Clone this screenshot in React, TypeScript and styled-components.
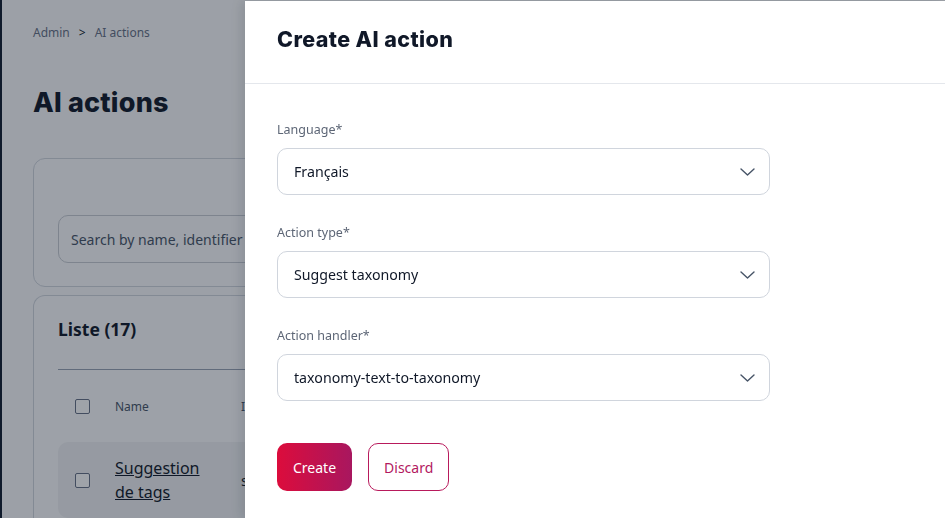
import { FC } from 'react';
import styled, { createGlobalStyle } from 'styled-components';

const GlobalStyle = createGlobalStyle`
  * {
    box-sizing: border-box;
  }
  body {
    margin: 0;
    font-family: 'Noto Sans', 'Open Sans', sans-serif;
    background-color: #f9fafb;
    color: #101828;
  }
`;

interface FieldProps {
  label: string;
  value: string;
}

const ChevronDown: FC = () => (
  <svg width='15' height='8' viewBox='0 0 15 8' fill='none'>
    <path d='M1 1l6.5 6 6.5-6' stroke='#475467' strokeWidth='1.4' strokeLinecap='round' strokeLinejoin='round' />
  </svg>
);

const SelectField: FC<FieldProps> = ({ label, value }) => (
  <Field>
    <FieldLabel>{label}</FieldLabel>
    <SelectBox>
      <span>{value}</span>
      <ChevronDown />
    </SelectBox>
  </Field>
);

const App: FC = () => {
  return (
    <>
      <GlobalStyle />
      <Page>
        <SideEdge />
        <Main>
          <Breadcrumbs>
            <span>Admin</span>
            <Separator>&gt;</Separator>
            <span>AI actions</span>
          </Breadcrumbs>
          <PageTitle>AI actions</PageTitle>
          <FilterCard>
            <SearchInput>Search by name, identifier</SearchInput>
          </FilterCard>
          <ListCard>
            <ListTitle>Liste (17)</ListTitle>
            <TableHead>
              <CellBox>
                <Checkbox />
              </CellBox>
              <HeadCell>Name</HeadCell>
              <HeadCell>Identifier</HeadCell>
            </TableHead>
            <TableRow>
              <CellBox>
                <Checkbox />
              </CellBox>
              <NameLink>Suggestion de tags</NameLink>
              <RowText>suggest-tags</RowText>
            </TableRow>
          </ListCard>
        </Main>
      </Page>
      <Overlay />
      <Drawer>
        <DrawerHeader>
          <DrawerTitle>Create AI action</DrawerTitle>
        </DrawerHeader>
        <DrawerBody>
          <SelectField label='Language*' value='Français' />
          <SelectField label='Action type*' value='Suggest taxonomy' />
          <SelectField label='Action handler*' value='taxonomy-text-to-taxonomy' />
          <Actions>
            <PrimaryButton>Create</PrimaryButton>
            <SecondaryButton>Discard</SecondaryButton>
          </Actions>
        </DrawerBody>
      </Drawer>
    </>
  );
};

export default App;

const Page = styled.div`
  display: flex;
  height: 518px;
  overflow: hidden;
  background-color: #fbfbfc;
`;

const SideEdge = styled.div`
  width: 2px;
  flex-shrink: 0;
  background-color: #0f1c2e;
`;

const Main = styled.div`
  flex: 1;
  padding: 24px 0 0 31px;
  display: flex;
  flex-direction: column;
`;

const Breadcrumbs = styled.div`
  display: flex;
  align-items: center;
  column-gap: 9px;
  font-size: 12px;
  line-height: 18px;
  color: #667085;
`;

const Separator = styled.span`
  color: #101828;
`;

const PageTitle = styled.h1`
  margin: 43px 0 0;
  font-family: Inter, sans-serif;
  font-weight: 800;
  font-size: 27px;
  line-height: 36px;
  letter-spacing: 0.2px;
  color: #101828;
`;

const FilterCard = styled.div`
  margin-top: 37px;
  width: 960px;
  height: 129px;
  padding: 56px 24px 0;
  border: 1px solid #d0d5dd;
  border-radius: 12px;
  background-color: #fcfcfd;
`;

const SearchInput = styled.div`
  width: 400px;
  height: 48px;
  padding: 0 12px;
  display: flex;
  align-items: center;
  border: 1px solid #c8ccd3;
  border-radius: 10px;
  background-color: #fcfcfd;
  font-size: 14px;
  color: #475467;
  white-space: nowrap;
`;

const ListCard = styled.div`
  margin-top: 8px;
  width: 960px;
  flex: 1;
  padding: 20px 24px 0;
  border: 1px solid #d0d5dd;
  border-bottom: none;
  border-radius: 12px 12px 0 0;
  background-color: #fcfcfd;
`;

const ListTitle = styled.h2`
  margin: 0;
  padding-bottom: 27px;
  font-size: 17.5px;
  line-height: 26px;
  font-weight: 700;
  color: #101828;
  border-bottom: 1px solid #98a2b3;
`;

const TableHead = styled.div`
  display: grid;
  grid-template-columns: 57px 126px 1fr;
  align-items: center;
  height: 72px;
`;

const CellBox = styled.div`
  display: flex;
  padding-left: 17px;
`;

const Checkbox = styled.span`
  display: block;
  width: 15px;
  height: 15px;
  border: 1px solid #667085;
  border-radius: 2px;
  background-color: #fff;
`;

const HeadCell = styled.span`
  font-size: 12px;
  color: #475467;
`;

const TableRow = styled.div`
  display: grid;
  grid-template-columns: 57px 126px 1fr;
  align-items: center;
  height: 76px;
  border-radius: 10px;
  background-color: #f0f1f3;
`;

const NameLink = styled.span`
  font-size: 16px;
  line-height: 24px;
  color: #101828;
  text-decoration: underline;
  width: 95px;
`;

const RowText = styled.span`
  font-size: 15px;
  color: #101828;
`;

const Overlay = styled.div`
  position: fixed;
  inset: 0;
  background-color: rgba(16, 24, 40, 0.4);
`;

const Drawer = styled.div`
  position: fixed;
  top: 1px;
  right: 0;
  bottom: 0;
  width: 700px;
  background-color: #fff;
  box-shadow: -4px 0 10px rgba(16, 24, 40, 0.12);
  display: flex;
  flex-direction: column;
`;

const DrawerHeader = styled.div`
  height: 83px;
  padding: 0 32px 7px;
  display: flex;
  align-items: center;
  border-bottom: 1px solid #e4e7ec;
`;

const DrawerTitle = styled.h2`
  margin: 0;
  font-family: Inter, sans-serif;
  font-weight: 800;
  font-size: 21.5px;
  line-height: 28px;
  letter-spacing: 0.4px;
  color: #101828;
`;

const DrawerBody = styled.div`
  padding: 37px 32px 0;
  display: flex;
  flex-direction: column;
  row-gap: 29px;
`;

const Field = styled.div`
  display: flex;
  flex-direction: column;
  row-gap: 9px;
`;

const FieldLabel = styled.label`
  font-size: 12.5px;
  line-height: 18px;
  color: #5d6676;
`;

const SelectBox = styled.div`
  width: 493px;
  height: 47px;
  padding: 0 14px 0 16px;
  display: flex;
  align-items: center;
  justify-content: space-between;
  border: 1px solid #d0d5dd;
  border-radius: 10px;
  font-size: 14.2px;
  color: #101828;
`;

const Actions = styled.div`
  margin-top: 13px;
  display: flex;
  column-gap: 16px;
`;

const PrimaryButton = styled.button`
  height: 48px;
  padding: 0 16px;
  border: none;
  border-radius: 10px;
  background: linear-gradient(90deg, #dc0c3c 0%, #a8175f 100%);
  color: #fff;
  font-family: 'Noto Sans', sans-serif;
  font-size: 14px;
  font-weight: 400;
`;

const SecondaryButton = styled.button`
  height: 48px;
  padding: 0 15px;
  border: 1px solid #b81a5c;
  border-radius: 10px;
  background: #fff;
  color: #b3195f;
  font-family: 'Noto Sans', sans-serif;
  font-size: 14px;
  font-weight: 400;
`;
